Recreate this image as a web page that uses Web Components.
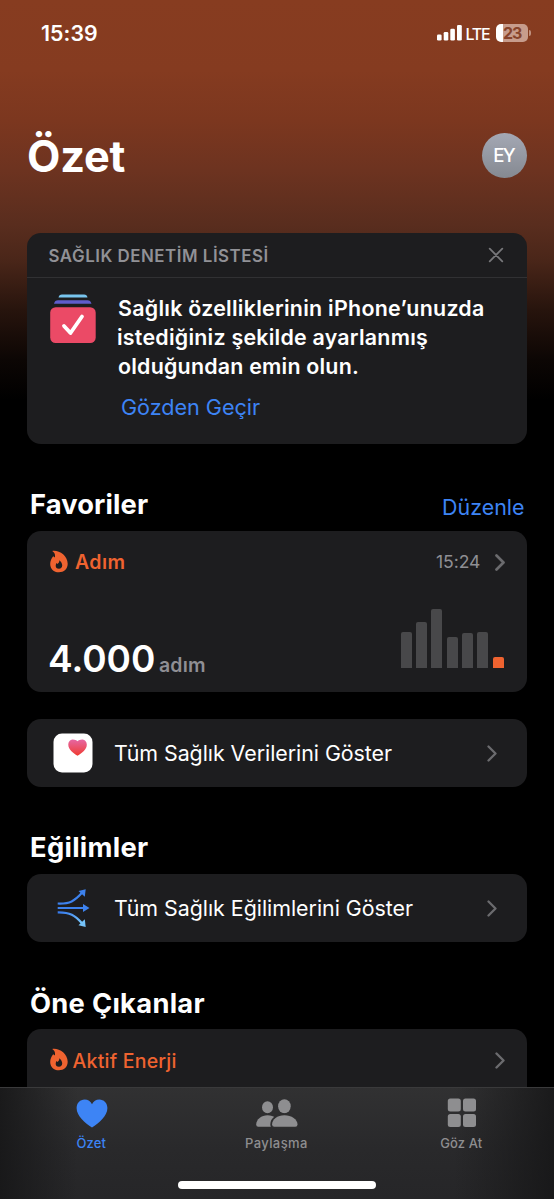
<!DOCTYPE html>
<html lang="tr">
<head>
<meta charset="utf-8">
<title>Özet</title>
<style>
html,body{margin:0;background:#000;overflow:hidden}
body{font-family:Inter,"Noto Sans",sans-serif;color:#fff}
</style>
</head>
<body>
<health-app></health-app>
<script>
const ctx = document.createElement('canvas').getContext('2d');
const define = (name, html, setup) => customElements.define(name, class extends HTMLElement {
  connectedCallback() {
    if (this.shadowRoot) return;
    const t = document.createElement('template');
    t.innerHTML = html;
    this.attachShadow({mode: 'open'}).appendChild(t.content.cloneNode(true));
    if (setup) setup(this, this.shadowRoot);
  }
});

/* Single line of text tracked to a given ink width: w = width, s = size, k = weight */
define('fit-text', `<style>:host{display:block;white-space:nowrap;flex:none;line-height:24px}span{display:block}</style><span><slot></slot></span>`, (el, root) => {
  const text = el.textContent, w = +el.getAttribute('w'), s = +el.getAttribute('s'), k = el.getAttribute('k') || 400;
  ctx.font = `${k} ${s}px Inter, "Noto Sans", sans-serif`;
  const m = ctx.measureText(text);
  const ink = m.actualBoundingBoxRight + m.actualBoundingBoxLeft;
  const span = root.querySelector('span');
  el.style.width = w + 'px';
  el.style.fontSize = s + 'px';
  el.style.fontWeight = k;
  span.style.letterSpacing = (w - ink) / (text.length - 1) + 'px';
  span.style.marginLeft = m.actualBoundingBoxLeft + 'px';
});

define('status-bar', `<style>
:host{display:flex;align-items:center;height:66px;padding:0 25px 0 41px;box-sizing:border-box}
.sp{flex:1}svg{display:block;margin-right:5px}
.lte{margin-top:1px}
.bat{width:32px;height:18px;border-radius:5px;margin-left:6px;background:linear-gradient(90deg,#fff 7px,#c79c8c 7px);display:flex;align-items:center;justify-content:center;color:#87432b}
.bat fit-text{margin:0 0 0 1px}
.cap{width:2px;height:6px;border-radius:0 3px 3px 0;background:#c0907e;margin-left:1px;margin-right:-2px}
</style>
<fit-text w="56" s="21.3" k="600">15:39</fit-text><div class="sp"></div>
<svg width="25" height="16" viewBox="0 0 25 16" fill="#fff"><rect y="9.5" width="4.6" height="6" rx="1.3"/><rect x="6.7" y="7" width="4.6" height="8.5" rx="1.3"/><rect x="13.3" y="3.7" width="4.6" height="11.8" rx="1.3"/><rect x="20" y="0" width="4.8" height="15.5" rx="1.3"/></svg>
<fit-text class="lte" w="23.5" s="16" k="500">LTE</fit-text>
<div class="bat"><fit-text w="19" s="16" k="700">23</fit-text></div><div class="cap"></div>`);

define('page-header', `<style>
:host{display:flex;align-items:center;justify-content:space-between;margin:66px 27px 0 28px;height:46px}
.title{margin-top:1px}
.av{width:45px;height:45px;border-radius:50%;background:linear-gradient(#a4a8b4,#858991);display:flex;align-items:center;justify-content:center}
.av fit-text{margin-left:1px}
</style><fit-text class="title" w="97.5" s="43.3" k="700">Özet</fit-text><div class="av"><fit-text w="21.5" s="18.6" k="500">EY</fit-text></div>`);

define('ui-card', `<style>:host{display:block;margin:0 27px;background:#1d1d1f;border-radius:14px;box-sizing:border-box;overflow:hidden}</style><slot></slot>`);

define('check-card', `<style>
:host{display:block}
ui-card{height:210.5px}
header{display:flex;justify-content:space-between;align-items:center;height:44px;padding:0 23px 0 21.5px;border-bottom:1.5px solid #313133;color:#919196}
header fit-text{margin-top:1px}
.body{display:grid;grid-template-columns:46px 1fr;column-gap:22.5px;padding:16px 22px 0 22.5px}
.lines{display:flex;flex-direction:column;padding-top:1.6px}
.lines fit-text{height:29.4px}
.link{color:#3d84f5;margin:11.5px 0 0 4px}
</style><ui-card><header><fit-text w="219" s="16.9" k="600">SAĞLIK DENETİM LİSTESİ</fit-text>
<svg width="16" height="16" viewBox="0 0 16 16" fill="none" stroke="#77777a" stroke-width="1.8" stroke-linecap="round"><path d="M1.7 1.7 14.3 14.3M14.3 1.7 1.7 14.3"/></svg></header>
<div class="body"><svg width="46" height="50" viewBox="0 0 46 50"><path d="M8.5 3.4Q9 .4 12 .4H34Q37 .4 37.500 3.400Z" fill="#78c5ee"/><path d="M4 9.700Q4.800 6.300 8 6.300H37.500Q40.500 6.300 41.500 9.700Z" fill="#5e5ccb"/><rect x=".2" y="13.200" width="45.500" height="35.800" rx="5.500" fill="#eb4a66"/><path d="M14 32 20.500 39 32 22.500" fill="none" stroke="#fff" stroke-width="3.800" stroke-linecap="round" stroke-linejoin="round"/></svg>
<div class="lines"><fit-text w="365" s="21.4" k="600">Sağlık özelliklerinin iPhone’unuzda</fit-text><fit-text w="309" s="21.4" k="600">istediğiniz şekilde ayarlanmış</fit-text><fit-text w="240" s="21.4" k="600">olduğundan emin olun.</fit-text>
<fit-text class="link" w="138" s="21.6">Gözden Geçir</fit-text></div></div></ui-card>`);

define('section-title', `<style>:host{display:flex;justify-content:space-between;align-items:center;height:28px;padding:0 30px 0 31px;color:#fff}::slotted([slot=action]){color:#3d84f5;margin-top:4px}</style><slot></slot><slot name="action"></slot>`);

define('ui-chevron', `<style>:host{display:block;flex:none}svg{display:block}</style><svg width="10" height="17" viewBox="0 0 10 17" fill="none" stroke="#6b6b6e" stroke-linecap="round" stroke-linejoin="round"><path d="M1.500 1.500 8.500 8.500 1.500 15.500"/></svg>`, (el, root) => {
  root.querySelector('path').setAttribute('stroke-width', el.getAttribute('weight') || 2.3);
});

define('flame-icon', `<style>:host{display:block;flex:none;margin-top:-2px}svg{display:block}</style><svg width="18" height="23" viewBox="0 0 18 23"><path fill="#ef6330" fill-rule="evenodd" d="M2.200.9C8.500-.300 17.700 5 17.700 13.800 17.700 19 14 22.300 8.900 22.300 3.600 22.300.2 18.900.2 14 .2 11 1.300 8.500 3.200 6.200L4.800 7.500C5.500 4.500 4.600 2.500 2.200.9ZM9.300 10.300C9.500 12.600 8.300 12.900 7.700 13.900L6.500 12.900C5 15.500 5.500 18.700 9 18.700 12.600 18.700 13.800 14 9.300 10.300Z"/></svg>`);

define('steps-card', `<style>
:host{display:block}ui-card{height:161px}
.top,.bottom{display:flex;padding:0 22px 0 22.5px}
.top{align-items:center;height:22px;padding-top:20.500px}
.name{color:#ef6330;margin-left:7.500px}.time{color:#8f8f94;margin-left:auto}
ui-chevron{margin-left:15px}
.bottom{align-items:flex-end;justify-content:space-between;margin-top:35.500px;padding:0 23.500px 0 22px}
.val{display:flex;align-items:baseline;gap:5px;margin-bottom:-9px}
.unit{color:#8f8f94}
.bars{display:flex;align-items:flex-end;gap:4.400px;height:59px}
.bars i{width:10.900px;background:#48484a;border-radius:2px 2px 0 0}
</style><ui-card><div class="top"><flame-icon></flame-icon><fit-text class="name" w="49.5" s="19.5" k="600">Adım</fit-text><fit-text class="time" w="44" s="17.600">15:24</fit-text><ui-chevron weight="2.7"></ui-chevron></div>
<div class="bottom"><div class="val"><fit-text w="105" s="37" k="600">4.000</fit-text><fit-text class="unit" w="46" s="19.500" k="600">adım</fit-text></div>
<div class="bars"></div></div></ui-card>`, (el, root) => {
  const bars = root.querySelector('.bars');
  [36, 46, 59, 31, 34.300, 36, 11].forEach((h, n) => {
    const b = document.createElement('i');
    b.style.height = h + 'px';
    if (n === 6) b.style.background = '#ef6330';
    bars.append(b);
  });
});

define('link-card', `<style>ui-card{height:68px}div{display:flex;align-items:center;height:68px;padding:0 30px 0 26px}.ic{width:40px;height:40px;padding:0;margin-right:22px}ui-chevron{margin-left:auto}:host{display:block}</style>
<ui-card><div><div class="ic"><slot name="icon"></slot></div><slot></slot><ui-chevron></ui-chevron></div></ui-card>`);

define('health-icon', `<style>:host,svg{display:block}</style><svg width="40" height="40" viewBox="0 0 40 40"><defs><linearGradient id="h" x2="0" y2="1"><stop stop-color="#e667a4"/><stop offset="1" stop-color="#ef3b30"/></linearGradient></defs><rect x=".5" y=".5" width="39" height="39" rx="8.500" fill="#fff"/><path fill="url(#h)" d="M24.500 22.800C20 20.200 15.300 16.500 15.300 11.800 15.300 8.600 17.300 6.500 19.900 6.500 21.900 6.500 23.500 7.200 24.500 8.300 25.500 7.200 27.100 6.500 29.100 6.500 31.700 6.500 33.800 8.600 33.800 11.800 33.800 16.500 29 20.200 24.500 22.800Z"/></svg>`);

define('trend-icon', `<style>:host,svg{display:block}</style><svg width="40" height="40" viewBox="0 0 40 40"><defs><linearGradient id="d" x2="1" y2="1"><stop stop-color="#3579ed"/><stop offset="1" stop-color="#79c8fa"/></linearGradient></defs><g fill="none" stroke="#3d82ee" stroke-width="2.200"><path d="M4.700 15.500C17 16 21.500 13 29 4.800"/><path d="M4.700 20H31"/><path stroke="url(#d)" d="M4.700 24.300C17 24 22 27.500 29 35.200"/></g><path fill="#3d82ee" d="M25.500 2.900 32.700 1.200 31.800 8.800ZM30 16 36.500 20 30 24Z"/><path fill="#75c2f8" d="M25.500 37.200 32.700 39 31.800 31.200Z"/></svg>`);

define('energy-card', `<style>:host{display:block}ui-card{height:72px;border-radius:14px 14px 0 0}div{display:flex;align-items:center;height:22px;padding:20px 22px 0 22.500px}fit-text{color:#ef6330;margin:1px 0 0 5px}ui-chevron{margin-left:auto}</style>
<ui-card><div><flame-icon></flame-icon><fit-text w="103" s="19.500" k="500">Aktif Enerji</fit-text><ui-chevron weight="2.4"></ui-chevron></div></ui-card>`);

define('tab-item', `<style>:host{display:flex;flex-direction:column;align-items:center;flex:1;color:#8e8e90}::slotted(svg){display:block;height:32px;margin-bottom:2px}</style><slot name="icon"></slot><slot></slot>`);

define('tab-bar', `<style>
:host{position:absolute;left:0;right:0;bottom:0;height:112px;box-sizing:border-box;border-top:1px solid #3a3a3b;background:linear-gradient(90deg,rgba(22,22,23,.85),rgba(22,22,23,0) 14%,rgba(22,22,23,0) 82%,rgba(22,22,23,.85)),linear-gradient(#313132,#29292b 55%,#262628)}
nav{display:grid;grid-template-columns:183px 187px 183px;padding-top:9px}
.home{width:198px;height:8px;border-radius:4px;background:#fff;margin:26px auto 0}
</style><nav>
<tab-item style="color:#3d84f5"><svg slot="icon" width="32" height="32" viewBox="0 0 32 32"><path fill="#3d84f5" d="M16 30.500C9 26 .6 19 .6 11 .6 6 4.200 2.500 8.600 2.500 12 2.500 14.600 4.300 16 7.200 17.400 4.300 20 2.500 23.400 2.500 27.800 2.500 31.400 6 31.400 11 31.400 19 23 26 16 30.500Z"/></svg><fit-text w="30" s="13" k="500">Özet</fit-text></tab-item>
<tab-item><svg slot="icon" width="42" height="32" viewBox="0 0 42 32" fill="#8e8e90"><ellipse cx="11.500" cy="10.300" rx="5.500" ry="6"/><path d="M11.500 18.300C18 18.300 23 22.500 23 27V29.800H2.200Q.2 29.800.2 27.500C.2 22.500 5.500 18.300 11.500 18.300Z"/><ellipse cx="28.400" cy="9.300" rx="6.300" ry="7"/><path stroke="#2e2e2f" stroke-width="3.6" paint-order="stroke" d="M28.400 18.300C35.500 18.300 41.500 22.500 41.500 27.500Q41.500 29.800 39.300 29.800H18.300Q16.100 29.800 16.100 27.500C16.100 22.500 21.300 18.300 28.400 18.300Z"/></svg><fit-text w="61" s="13" k="500">Paylaşma</fit-text></tab-item>
<tab-item><svg slot="icon" width="30" height="32" viewBox="0 0 30 32" fill="#8e8e90"><rect x=".8" y="1.500" width="13" height="13" rx="2.500"/><rect x="16" y="1.500" width="13" height="13" rx="2.500"/><rect x=".8" y="17" width="13" height="13" rx="2.500"/><rect x="16" y="17" width="13" height="13" rx="2.500"/></svg><fit-text w="42.5" s="13" k="500">Göz At</fit-text></tab-item>
</nav><div class="home"></div>`);

define('health-app', `<style>
:host{display:block;position:relative;width:554px;height:1199px;overflow:hidden;background:linear-gradient(#873c20 0,#853b20 70px,#7c371f 120px,#6d3320 170px,#592d1e 225px,#4a2619 260px,#27140d 310px,#0c0604 360px,#000 400px)}
check-card{margin-top:55px}
</style>
<status-bar></status-bar><page-header></page-header><check-card></check-card>
<section-title style="margin-top:47px"><fit-text w="117" s="27.3" k="700">Favoriler</fit-text><fit-text slot="action" w="81" s="21.4">Düzenle</fit-text></section-title>
<steps-card style="margin-top:12px"></steps-card>
<link-card style="margin-top:27.500px"><health-icon slot="icon"></health-icon><fit-text w="277" s="21.400">Tüm Sağlık Verilerini Göster</fit-text></link-card>
<section-title style="margin-top:47px"><fit-text w="117" s="27.3" k="700">Eğilimler</fit-text></section-title>
<link-card style="margin-top:12px"><trend-icon slot="icon"></trend-icon><fit-text w="298" s="21.400">Tüm Sağlık Eğilimlerini Göster</fit-text></link-card>
<section-title style="margin-top:47.5px"><fit-text w="173.5" s="27.3" k="700">Öne Çıkanlar</fit-text></section-title>
<energy-card style="margin-top:11.5px"></energy-card>
<tab-bar></tab-bar>`);
</script>
</body>
</html>
